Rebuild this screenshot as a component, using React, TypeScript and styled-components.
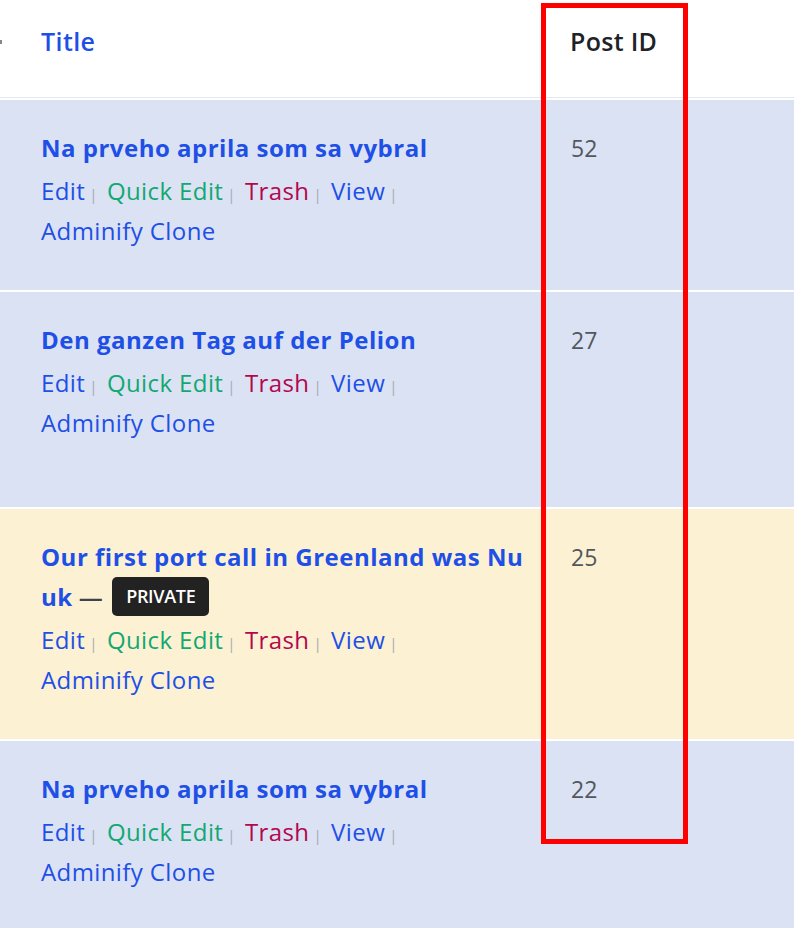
import React from "react";
import styled, { createGlobalStyle } from "styled-components";

const GlobalStyle = createGlobalStyle`
  html, body {
    margin: 0;
    padding: 0;
    background: #ffffff;
  }
  body {
    font-family: "Open Sans", "Noto Sans", sans-serif;
    overflow: hidden;
  }
`;

type Post = {
  id: number;
  title: string;
  isPrivate?: boolean;
  minHeight: number;
};

const posts: Post[] = [
  { id: 52, title: "Na prveho aprila som sa vybral", minHeight: 190 },
  { id: 27, title: "Den ganzen Tag auf der Pelion", minHeight: 215 },
  { id: 25, title: "Our first port call in Greenland was Nuuk", isPrivate: true, minHeight: 230 },
  { id: 22, title: "Na prveho aprila som sa vybral", minHeight: 200 },
];

const Page = styled.div`
  position: relative;
  width: 794px;
  height: 928px;
  overflow: hidden;
`;

const Table = styled.div`
  display: flex;
  flex-direction: column;
  gap: 2px;
  background: #ffffff;
`;

const HeaderRow = styled.div`
  display: grid;
  grid-template-columns: 544px 1fr;
  height: 97px;
  border-bottom: 1px solid #e4e8f2;
  align-items: start;
`;

const HeadCell = styled.div<{ $dark?: boolean }>`
  padding: 25px 0 0 ${(p) => (p.$dark ? "26px" : "41px")};
  font-size: 25px;
  font-weight: 600;
  line-height: 32px;
  color: ${(p) => (p.$dark ? "#1d2327" : "#1e4fe6")};
  letter-spacing: ${(p) => (p.$dark ? "0.3px" : "0.4px")};
`;

const Row = styled.div<{ $private?: boolean; $min: number }>`
  display: grid;
  grid-template-columns: 544px 1fr;
  min-height: ${(p) => p.$min}px;
  background: ${(p) => (p.$private ? "#fcf1d3" : "#dbe2f4")};
`;

const TitleCell = styled.div`
  padding: 28px 14px 0 41px;
`;

const IdCell = styled.div`
  padding: 28px 0 0 27px;
  font-size: 23px;
  line-height: 40px;
  color: #50575e;
`;

const TitleLine = styled.div`
  font-size: 24px;
  font-weight: 700;
  line-height: 40px;
  letter-spacing: 0.5px;
  word-break: break-all;
  margin-bottom: 3px;
`;

const TitleLink = styled.a`
  color: #1e4fe6;
  text-decoration: none;
`;

const Dash = styled.span`
  color: #3c434a;
  font-weight: 600;
  margin: 0 9px 0 6px;
  word-break: normal;
`;

const Badge = styled.span`
  display: inline-block;
  background: #222222;
  color: #ffffff;
  font-size: 18px;
  font-weight: 600;
  line-height: 19px;
  padding: 10px 14px;
  border-radius: 5px;
  letter-spacing: -0.3px;
  vertical-align: 3px;
  word-break: normal;
`;

const Actions = styled.div`
  font-size: 24px;
  line-height: 40px;
  max-width: 400px;
  letter-spacing: 0.4px;
`;

const Action = styled.a<{ $tone: "blue" | "green" | "red" }>`
  text-decoration: none;
  color: ${(p) =>
    p.$tone === "green" ? "#12a870" : p.$tone === "red" ? "#b3074e" : "#1e4fe6"};
  white-space: nowrap;
`;

const Sep = styled.span`
  color: #a7aab2;
  font-size: 15px;
  line-height: 1;
  margin: 0 9px 0 4px;
`;

const Highlight = styled.div`
  position: absolute;
  left: 541px;
  top: 3px;
  width: 147px;
  height: 841px;
  border: 5px solid #ff0000;
  box-sizing: border-box;
  pointer-events: none;
`;

const EdgeMark = styled.div`
  position: absolute;
  left: 0;
  top: 40px;
  width: 2px;
  height: 4px;
  background: #888;
`;

const App = () => {
  return (
    <Page>
      <GlobalStyle />
      <Table>
        <HeaderRow>
          <HeadCell>Title</HeadCell>
          <HeadCell $dark>Post ID</HeadCell>
        </HeaderRow>
        {posts.map((post, i) => (
          <Row key={i} $private={post.isPrivate} $min={post.minHeight}>
            <TitleCell>
              <TitleLine>
                <TitleLink href="#">{post.title}</TitleLink>
                {post.isPrivate && (
                  <>
                    <Dash>—</Dash>
                    <Badge>PRIVATE</Badge>
                  </>
                )}
              </TitleLine>
              <Actions>
                <Action $tone="blue" href="#">Edit</Action>
                <Sep>|</Sep>
                <Action $tone="green" href="#">Quick Edit</Action>
                <Sep>|</Sep>
                <Action $tone="red" href="#">Trash</Action>
                <Sep>|</Sep>
                <Action $tone="blue" href="#">View</Action>
                <Sep>|</Sep>{" "}
                <Action $tone="blue" href="#">Adminify Clone</Action>
              </Actions>
            </TitleCell>
            <IdCell>{post.id}</IdCell>
          </Row>
        ))}
      </Table>
      <EdgeMark />
      <Highlight />
    </Page>
  );
};

export default App;
